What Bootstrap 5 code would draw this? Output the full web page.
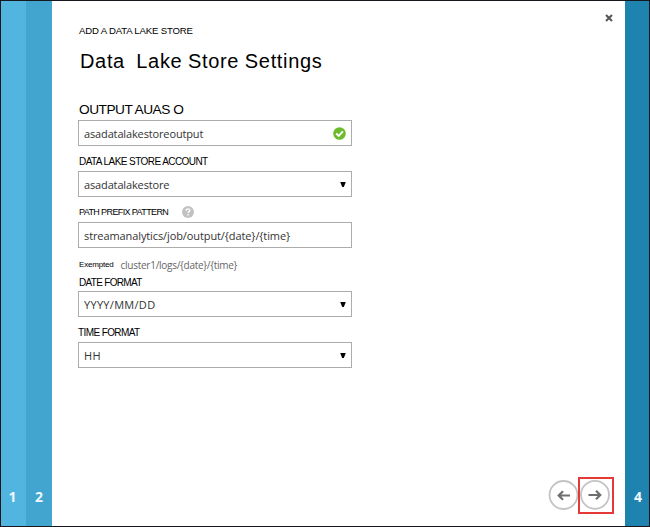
<!DOCTYPE html>
<html lang="en">
<head>
<meta charset="utf-8">
<title>Data Lake Store Settings</title>
<meta name="viewport" content="width=device-width, initial-scale=1">
<link href="https://cdn.jsdelivr.net/npm/bootstrap@5.3.0/dist/css/bootstrap.min.css" rel="stylesheet">
<style>
body{font-family:"Liberation Sans",Arial,sans-serif;color:#000;overflow:hidden}
.wizard{height:527px;border:1px solid #15171c;background:#fff}
.step{font:700 14px/20px "Open Sans",sans-serif;color:#eff9ff;padding-bottom:19px}
.step-1{width:25px;background:#52b5e0;padding-right:2px}
.step-2{width:26px;background:#41a5d0}
.step-4{width:24px;background:#1f83b0;padding-left:2px}
.pane{padding:22px 0 0 26px}
.txt{white-space:pre;line-height:16px;height:16px}
.eyebrow{font-size:9.6px;letter-spacing:-.17px;margin-left:1px}
.heading{font-size:20px;line-height:32px;height:32px;letter-spacing:.66px;word-spacing:-.5px;margin:6px 0 23px 2px;font-weight:400}
.lbl-lg{font-size:13.7px;letter-spacing:-.5px;line-height:20px;height:20px;margin-left:1px}
.lbl{font-size:10px;letter-spacing:-.57px;margin:8px 0 1px 1px}
.lbl-sm{font-size:9px;letter-spacing:-.61px;margin-top:-2px}
.lbl-date{letter-spacing:-.68px;margin:2px 0 0 1px}
.lbl-time{letter-spacing:-.6px;margin-left:0}
.field{width:274px;height:26px;border:1px solid #acacac;padding:0 5px;font:11px/25px "Open Sans",sans-serif;letter-spacing:-.14px;color:#333}
.field-path{letter-spacing:-.1px}
.field-format{letter-spacing:.3px}
.hint{font-size:8px;letter-spacing:-.18px;margin:9px 0 0 1px;gap:7px}
.hint-path{font:10px/16px "Open Sans",sans-serif;letter-spacing:-.27px;color:#666}
.help{margin:-3px 0 0 14px}
.close-x{right:36px;top:13px;line-height:0}
.pager{right:35px;bottom:12px}
.round{width:30px;height:30px;overflow:visible}
.marked{width:36px;height:37px;border:2.5px solid #e53935;padding:0 2px 2px 0}
</style>
</head>
<body>
<div class="wizard d-flex position-relative">
  <div class="step step-1 d-flex align-items-end justify-content-center">1</div>
  <div class="step step-2 d-flex align-items-end justify-content-center">2</div>
  <main class="pane flex-grow-1">
    <div class="txt eyebrow">ADD A DATA LAKE STORE</div>
    <h1 class="txt heading">Data  Lake Store Settings</h1>
    <div class="txt lbl-lg">OUTPUT AUAS O</div>
    <div class="field d-flex align-items-center justify-content-between"><span>asadatalakestoreoutput</span>
      <svg width="13" height="13" viewBox="0 0 13 13"><circle cx="6.5" cy="6.5" r="6.3" fill="#6cbb2c"/><path d="M3.2 6.6 5.7 8.9 9.9 4.3" fill="none" stroke="#fff" stroke-width="2"/></svg></div>
    <div class="txt lbl">DATA LAKE STORE ACCOUNT</div>
    <div class="field d-flex align-items-center justify-content-between"><span>asadatalakestore</span>
      <svg width="6" height="7" viewBox="0 0 6 7"><path d="M.2 1H5.8L3.8 6H2.2Z"/></svg></div>
    <div class="txt lbl d-flex align-items-center"><span class="lbl-sm">PATH PREFIX PATTERN</span>
      <svg class="help" width="12" height="12" viewBox="0 0 12 12"><circle cx="6" cy="6" r="6" fill="#c2c2c2"/><path d="M4.2 4.7C4.2 2.2 7.9 2.3 7.8 4.5 7.8 5.6 6.1 5.7 6.1 7M6.1 8.1V9.5" fill="none" stroke="#fff" stroke-width="1.4"/></svg></div>
    <div class="field field-path">streamanalytics/job/output/{date}/{time}</div>
    <div class="txt hint d-flex"><span>Exempted</span><span class="hint-path">cluster1/logs/{date}/{time}</span></div>
    <div class="txt lbl lbl-date">DATE FORMAT</div>
    <div class="field field-format d-flex align-items-center justify-content-between"><span>YYYY/MM/DD</span>
      <svg width="6" height="7" viewBox="0 0 6 7"><path d="M.2 1H5.8L3.8 6H2.2Z"/></svg></div>
    <div class="txt lbl lbl-time">TIME FORMAT</div>
    <div class="field field-format d-flex align-items-center justify-content-between"><span>HH</span>
      <svg width="6" height="7" viewBox="0 0 6 7"><path d="M.2 1H5.8L3.8 6H2.2Z"/></svg></div>
  </main>
  <div class="step step-4 d-flex align-items-end justify-content-center">4</div>
  <div class="close-x position-absolute"><svg width="8" height="8" viewBox="0 0 8 8"><path d="M1 1 7 7M7 1 1 7" stroke="#555" stroke-width="2"/></svg></div>
  <div class="pager position-absolute d-flex align-items-center">
    <svg class="round" viewBox="0 0 30 30" fill="none"><circle cx="15.5" cy="14" r="14" stroke="#c4c4c4" stroke-width="1.8"/><path d="M22 14.5H11M15 10.2 10.7 14.5 15 18.8" stroke="#6e6e6e" stroke-width="2.2"/></svg>
    <div class="marked d-flex align-items-center justify-content-center"><svg class="round" viewBox="0 0 30 30" fill="none"><circle cx="15" cy="14.8" r="14" stroke="#c4c4c4" stroke-width="1.8"/><path d="M8.5 15H20M16 10.7 20.3 15 16 19.3" stroke="#6e6e6e" stroke-width="2.2"/></svg></div>
  </div>
</div>
<script src="https://cdn.jsdelivr.net/npm/bootstrap@5.3.0/dist/js/bootstrap.bundle.min.js"></script>
</body>
</html>
